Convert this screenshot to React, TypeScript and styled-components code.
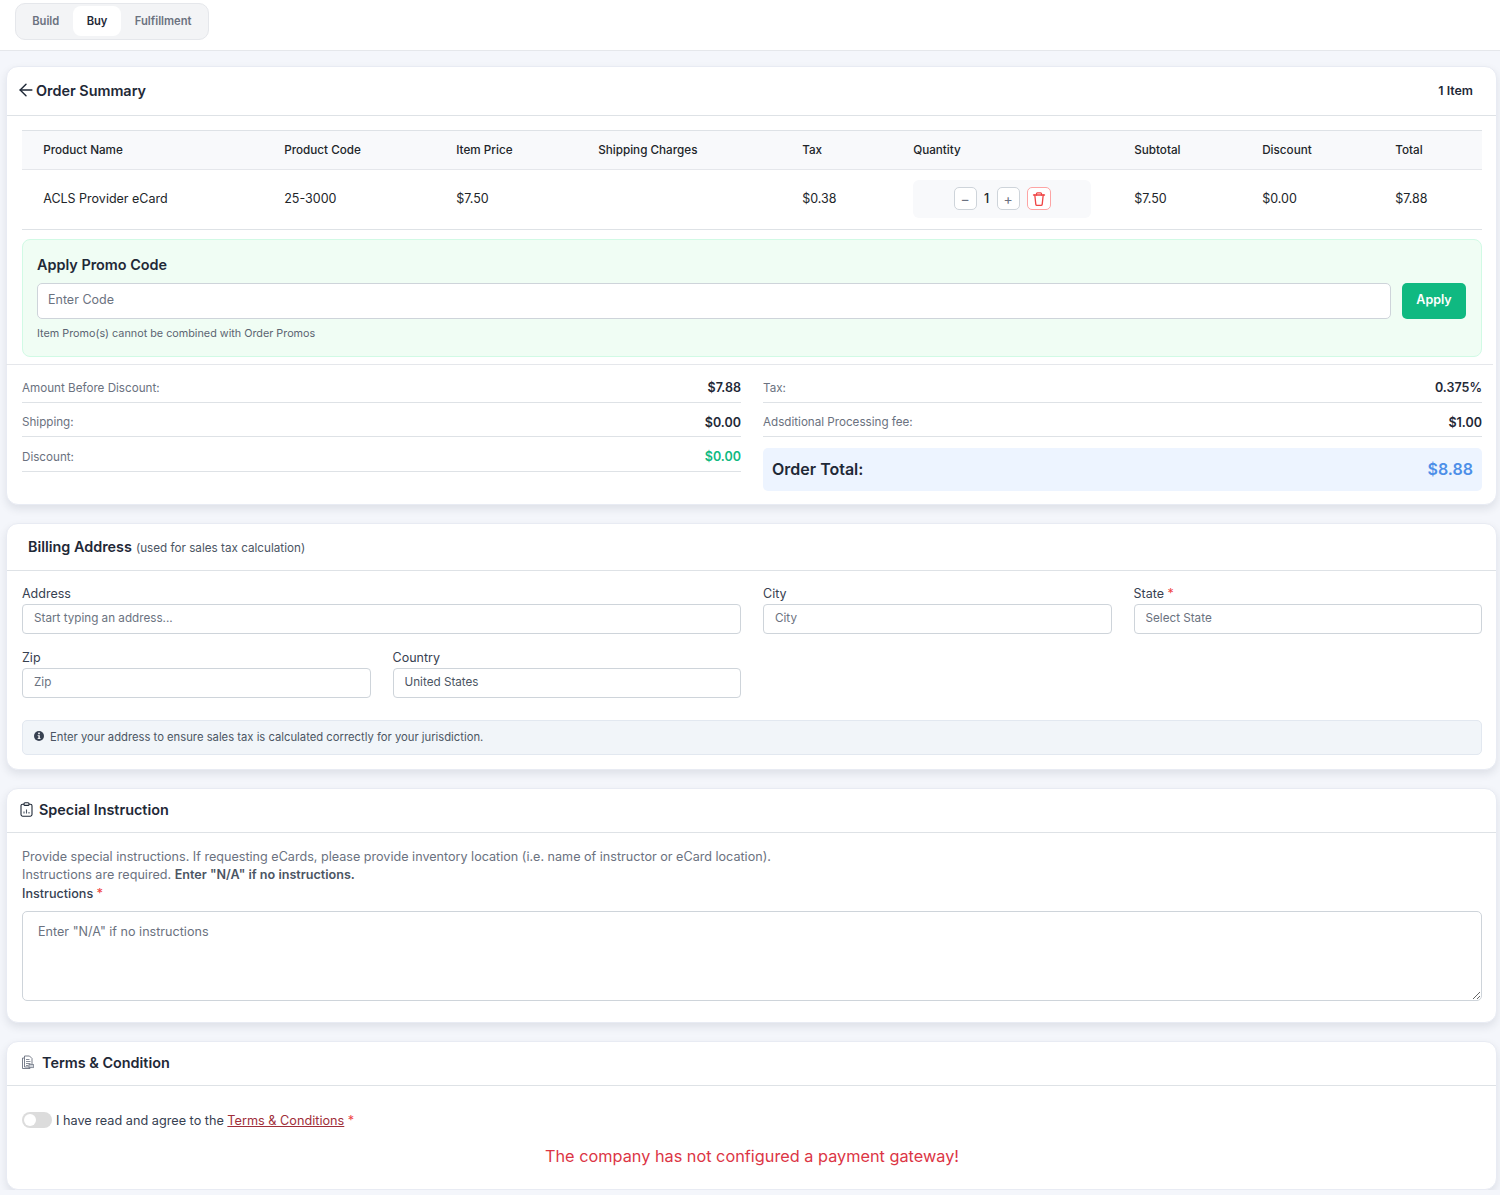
import React from 'react';
import styled, {createGlobalStyle} from 'styled-components';
import {ArrowLeft} from 'lucide-react';

const GlobalStyle = createGlobalStyle`
  html, body { margin: 0; padding: 0; background: #f4f6fb; }
  body { font-family: Inter, "Noto Sans", sans-serif; color: #212529; font-size: 13px; }
  * { box-sizing: border-box; }
`;

const TopBar = styled.div`
  height: 51px;
  background: #fff;
  border-bottom: 1px solid #e5e7eb;
  padding: 3px 15px;
`;
const Tabs = styled.div`
  display: inline-flex;
  height: 37px;
  padding: 2px 3px 3px;
  gap: 1px;
  background: #f3f4f6;
  border: 1px solid #e5e7eb;
  border-radius: 10px;
`;
const Tab = styled.div<{$active?: boolean}>`
  display: flex;
  align-items: center;
  padding: 0 13.2px 1px;
  font-size: 11.2px;
  font-weight: 600;
  border-radius: 8px;
  color: ${p => (p.$active ? '#1f2937' : '#6b7280')};
  background: ${p => (p.$active ? '#fff' : 'transparent')};
`;

const Main = styled.div`
  padding: 15px 3px 0 6px;
  display: flex;
  flex-direction: column;
  gap: 18px;
`;
const Card = styled.section`
  background: #fff;
  border: 1px solid #e8ebf3;
  border-radius: 12px;
  box-shadow: 0 4px 8px rgba(30, 41, 59, 0.1);
`;
const CardHeader = styled.div<{$h: number; $pl?: number}>`
  height: ${p => p.$h}px;
  display: flex;
  align-items: center;
  justify-content: space-between;
  padding: 0 23px 2px ${p => p.$pl ?? 13}px;
  border-bottom: 1px solid #dee2e6;
`;
const Title = styled.div<{$gap?: number}>`
  display: flex;
  align-items: center;
  gap: ${p => p.$gap ?? 6}px;
  font-size: 14.4px;
  font-weight: 600;
  color: #1f2937;
`;
const TitleNote = styled.span`
  font-size: 11.7px;
  font-weight: 400;
  color: #4b5563;
  margin-left: 4px;
`;
const ItemCount = styled.div`
  font-size: 12.4px;
  font-weight: 600;
  color: #1f2937;
`;
const Body = styled.div`
  padding: 14px 14px 0 15px;
`;

const Table = styled.table`
  width: 100%;
  table-layout: fixed;
  border-collapse: collapse;
  color: #212529;
`;
const Th = styled.th`
  height: 39px;
  padding: 0 0 1px 21.2px;
  text-align: left;
  font-weight: 500;
  font-size: 11.7px;
  background: #f8f9fb;
  border-top: 1px solid #dee2e6;
  border-bottom: 1px solid #e5e7eb;
`;
const Td = styled.td`
  height: 60px;
  padding: 0 0 2px 21.2px;
  font-size: 12.5px;
  border-bottom: 1px solid #dee2e6;
`;
const QtyBox = styled.div`
  width: 178px;
  height: 38px;
  display: flex;
  align-items: center;
  justify-content: center;
  gap: 7px;
  background: #f8f9fb;
  border-radius: 6px;
`;
const QtyBtn = styled.button`
  width: 23px;
  height: 23px;
  padding: 0;
  display: flex;
  align-items: center;
  justify-content: center;
  background: #fff;
  border: 1px solid #ced4da;
  border-radius: 5px;
  color: #6b7280;
  font-family: inherit;
  font-size: 14px;
`;
const QtyValue = styled.span`
  width: 6px;
  text-align: center;
  font-weight: 500;
  font-size: 12.5px;
`;
const TrashBtn = styled(QtyBtn)`
  width: 24px;
  border-color: #fda4a4;
  color: #ef4444;
`;

const Promo = styled.div`
  height: 118px;
  margin-top: 9px;
  padding: 15px 15px 15px 14px;
  background: #f0fdf4;
  border: 1px solid #d1fae5;
  border-radius: 8px;
`;
const PromoTitle = styled.div`
  font-size: 14.4px;
  font-weight: 600;
  color: #1f2937;
  line-height: 20px;
`;
const PromoRow = styled.div`
  display: flex;
  gap: 11px;
  margin-top: 8px;
`;
const PromoInput = styled.input`
  flex: 1;
  height: 36px;
  padding: 0 10px 4px;
  font-family: inherit;
  font-size: 12.5px;
  background: #fff;
  border: 1px solid #ced4da;
  border-radius: 5px;
  &::placeholder { color: #6b7280; opacity: 1; }
`;
const ApplyBtn = styled.button`
  width: 64px;
  height: 36px;
  padding: 0 0 4px;
  background: #10b981;
  border: 0;
  border-radius: 5px;
  color: #fff;
  font-family: inherit;
  font-size: 12.5px;
  font-weight: 600;
`;
const PromoNote = styled.div`
  margin-top: 8px;
  font-size: 10.8px;
  color: #5b6472;
`;

const Divider = styled.div`
  height: 1px;
  margin: 7px -11px 0 -16px;
  background: #e5e7eb;
`;
const SummaryGrid = styled.div`
  display: grid;
  grid-template-columns: 719px 719px;
  gap: 22px;
  padding: 3px 0 13px;
`;
const SummaryCol = styled.div`
  display: flex;
  flex-direction: column;
`;
const SummaryRow = styled.div`
  height: 34.5px;
  display: flex;
  align-items: center;
  justify-content: space-between;
  padding-top: 6px;
  border-bottom: 1px solid #dee2e6;
`;
const SummaryLabel = styled.span`
  font-size: 11.65px;
  color: #6b7280;
`;
const SummaryValue = styled.span<{$green?: boolean}>`
  font-size: 12.5px;
  font-weight: 600;
  color: ${p => (p.$green ? '#10b981' : '#1f2937')};
`;
const TotalBox = styled.div`
  height: 43px;
  margin-top: 11px;
  padding: 0 9px 1px;
  display: flex;
  align-items: center;
  justify-content: space-between;
  background: #edf4ff;
  border-radius: 5px;
`;
const TotalLabel = styled.span`
  font-size: 16px;
  font-weight: 600;
  color: #1f2937;
`;
const TotalValue = styled.span`
  font-size: 16px;
  font-weight: 600;
  color: #4d8fe8;
`;

const FormGrid = styled.div`
  display: grid;
  grid-template-columns: repeat(12, 1fr);
  column-gap: 22px;
  row-gap: 15px;
`;
const Field = styled.div<{$span: number}>`
  grid-column: span ${p => p.$span};
  display: flex;
  flex-direction: column;
`;
const FormSplit = styled.div`
  grid-column: span 6;
  display: grid;
  grid-template-columns: 1fr 1fr;
  gap: 22px;
`;
const Label = styled.label`
  font-size: 12.5px;
  line-height: 18px;
  margin-bottom: 1px;
  color: #374151;
`;
const Req = styled.span`
  color: #ef4444;
`;
const Input = styled.input`
  height: 30px;
  width: 100%;
  padding: 0 11px 2px;
  font-family: inherit;
  font-size: 11.7px;
  color: #4b5563;
  border: 1px solid #ced4da;
  border-radius: 4px;
  background: #fff;
  &::placeholder { color: #6b7280; opacity: 1; }
`;
const InfoBar = styled.div`
  height: 35px;
  margin-top: 22px;
  margin-bottom: 14px;
  padding: 0 11px 1px;
  display: flex;
  align-items: center;
  gap: 6px;
  background: #f1f5f9;
  border: 1px solid #e2e8f0;
  border-radius: 5px;
  font-size: 11.25px;
  color: #4b5563;
`;

const InstructionText = styled.p`
  margin: 0;
  padding-top: 1px;
  font-size: 12.6px;
  line-height: 18px;
  color: #6b7280;
  b { font-weight: 600; color: #4b5563; }
`;
const InstructionLabel = styled.div`
  margin-top: 1px;
  font-size: 12.6px;
  line-height: 18px;
  font-weight: 500;
  color: #374151;
`;
const Textarea = styled.textarea`
  display: block;
  width: 100%;
  height: 90px;
  margin: 8px 0 21px;
  padding: 12px 15px;
  font-family: inherit;
  font-size: 12.6px;
  border: 1px solid #ced4da;
  border-radius: 5px;
  &::placeholder { color: #6b7280; opacity: 1; }
`;

const AgreeRow = styled.div`
  display: flex;
  align-items: center;
  gap: 4px;
  margin-top: 12px;
  font-size: 12.7px;
  color: #374151;
  a { color: #9f2f3a; text-decoration: underline; margin: 0 3.5px; }
`;
const Switch = styled.div`
  width: 30px;
  height: 16px;
  padding: 2px;
  background: #dcdcdc;
  border-radius: 8px;
  &::before {
    content: '';
    display: block;
    width: 12px;
    height: 12px;
    border-radius: 50%;
    background: #fff;
  }
`;
const GatewayError = styled.div`
  margin: 18px 0 23px;
  text-align: center;
  font-size: 16.3px;
  line-height: 20px;
  color: #dc3545;
`;

const InfoDot = () => (
  <svg width="10" height="10" viewBox="0 0 10 10" style={{flex: 'none', marginTop: -2}}>
    <circle cx="5" cy="5" r="5" fill="#374151" />
    <rect x="4.2" y="1.6" width="1.6" height="1.6" fill="#fff" />
    <path d="M3.6 4.2h2.2v3h.8v.9H3.6v-.9h.8V5.1h-.8z" fill="#fff" />
  </svg>
);
const TrashIcon = () => (
  <svg width="16" height="16" viewBox="0 0 16 16" fill="none" stroke="currentColor" strokeWidth="1.3" strokeLinecap="round">
    <path d="M2.5 4h11" />
    <path d="M5.5 4V2.7c0-.5.4-.9.9-.9h3.2c.5 0 .9.4.9.9V4" />
    <path d="M3.8 4l1 9.3c.1.6.5 1 1.1 1h4.2c.6 0 1-.4 1.1-1l1-9.3" />
  </svg>
);
const ClipboardIcon = () => (
  <svg width="13" height="15" viewBox="0 0 13 15" fill="none" stroke="#1f2937" strokeWidth="1.1">
    <rect x="1" y="2.2" width="11" height="12" rx="1.6" />
    <rect x="4" y="0.8" width="5" height="2.6" rx="1" fill="#fff" />
    <path d="M4 11.5V9.5M6.5 11.5V7.5M9 11.5V10" stroke="#4b5563" />
  </svg>
);
const DocsIcon = () => (
  <svg width="14" height="15" viewBox="0 0 14 15" fill="none" stroke="#6b7280" strokeWidth="0.9">
    <path d="M3.5 1h5l2.5 2.5V12H3.5z" fill="#fff" />
    <path d="M3.5 3H1.5v10.5H9V12" />
    <path d="M5 4.5h3.5M5 6.5h4.5M5 8.5h4.5M5 10.5h2.5" strokeWidth="0.8" />
    <rect x="8" y="9.5" width="4.6" height="3.2" fill="#d1d5db" strokeWidth="0.7" />
  </svg>
);

const columns = [241, 172, 142, 204, 111, 221, 128, 133, 108];
const heads = ['Product Name', 'Product Code', 'Item Price', 'Shipping Charges', 'Tax', 'Quantity', 'Subtotal', 'Discount', 'Total'];

const App = () => (
  <>
    <GlobalStyle />
    <TopBar>
      <Tabs>
        <Tab>Build</Tab>
        <Tab $active>Buy</Tab>
        <Tab>Fulfillment</Tab>
      </Tabs>
    </TopBar>
    <Main>
      <Card>
        <CardHeader $h={49} $pl={9}>
          <Title $gap={0}><ArrowLeft size={20} strokeWidth={1.7} color="#1f2937" />Order Summary</Title>
          <ItemCount>1 Item</ItemCount>
        </CardHeader>
        <Body>
          <Table>
            <colgroup>
              {columns.map((w, i) => <col key={i} style={{width: w}} />)}
            </colgroup>
            <thead>
              <tr>{heads.map(h => <Th key={h}>{h}</Th>)}</tr>
            </thead>
            <tbody>
              <tr>
                <Td>ACLS Provider eCard</Td>
                <Td>25-3000</Td>
                <Td>$7.50</Td>
                <Td />
                <Td>$0.38</Td>
                <Td>
                  <QtyBox>
                    <QtyBtn>−</QtyBtn>
                    <QtyValue>1</QtyValue>
                    <QtyBtn>+</QtyBtn>
                    <TrashBtn><TrashIcon /></TrashBtn>
                  </QtyBox>
                </Td>
                <Td>$7.50</Td>
                <Td>$0.00</Td>
                <Td>$7.88</Td>
              </tr>
            </tbody>
          </Table>
          <Promo>
            <PromoTitle>Apply Promo Code</PromoTitle>
            <PromoRow>
              <PromoInput placeholder="Enter Code" />
              <ApplyBtn>Apply</ApplyBtn>
            </PromoRow>
            <PromoNote>Item Promo(s) cannot be combined with Order Promos</PromoNote>
          </Promo>
          <Divider />
          <SummaryGrid>
            <SummaryCol>
              <SummaryRow><SummaryLabel>Amount Before Discount:</SummaryLabel><SummaryValue>$7.88</SummaryValue></SummaryRow>
              <SummaryRow><SummaryLabel>Shipping:</SummaryLabel><SummaryValue>$0.00</SummaryValue></SummaryRow>
              <SummaryRow><SummaryLabel>Discount:</SummaryLabel><SummaryValue $green>$0.00</SummaryValue></SummaryRow>
            </SummaryCol>
            <SummaryCol>
              <SummaryRow><SummaryLabel>Tax:</SummaryLabel><SummaryValue>0.375%</SummaryValue></SummaryRow>
              <SummaryRow><SummaryLabel>Adsditional Processing fee:</SummaryLabel><SummaryValue>$1.00</SummaryValue></SummaryRow>
              <TotalBox><TotalLabel>Order Total:</TotalLabel><TotalValue>$8.88</TotalValue></TotalBox>
            </SummaryCol>
          </SummaryGrid>
        </Body>
      </Card>

      <Card>
        <CardHeader $h={47} $pl={21}>
          <Title>
            <span>Billing Address<TitleNote>(used for sales tax calculation)</TitleNote></span>
          </Title>
        </CardHeader>
        <Body>
          <FormGrid>
            <Field $span={6}>
              <Label>Address</Label>
              <Input placeholder="Start typing an address..." />
            </Field>
            <Field $span={3}>
              <Label>City</Label>
              <Input placeholder="City" />
            </Field>
            <Field $span={3}>
              <Label>State <Req>*</Req></Label>
              <Input placeholder="Select State" />
            </Field>
            <FormSplit>
              <Field $span={1}>
                <Label>Zip</Label>
                <Input placeholder="Zip" />
              </Field>
              <Field $span={1}>
                <Label>Country</Label>
                <Input defaultValue="United States" />
              </Field>
            </FormSplit>
          </FormGrid>
          <InfoBar>
            <InfoDot />
            Enter your address to ensure sales tax is calculated correctly for your jurisdiction.
          </InfoBar>
        </Body>
      </Card>

      <Card>
        <CardHeader $h={44}>
          <Title $gap={6}><ClipboardIcon />Special Instruction</Title>
        </CardHeader>
        <Body>
          <InstructionText>
            Provide special instructions. If requesting eCards, please provide inventory location (i.e. name of instructor or eCard location).<br />
            Instructions are required. <b>Enter "N/A" if no instructions.</b>
          </InstructionText>
          <InstructionLabel>Instructions <Req>*</Req></InstructionLabel>
          <Textarea placeholder={'Enter "N/A" if no instructions'} />
        </Body>
      </Card>

      <Card>
        <CardHeader $h={44} $pl={14}>
          <Title $gap={7}><DocsIcon />Terms &amp; Condition</Title>
        </CardHeader>
        <Body>
          <AgreeRow>
            <Switch />
            <span>I have read and agree to the<a href="#terms">Terms &amp; Conditions</a><Req>*</Req></span>
          </AgreeRow>
          <GatewayError>The company has not configured a payment gateway!</GatewayError>
        </Body>
      </Card>
    </Main>
  </>
);

export default App;
